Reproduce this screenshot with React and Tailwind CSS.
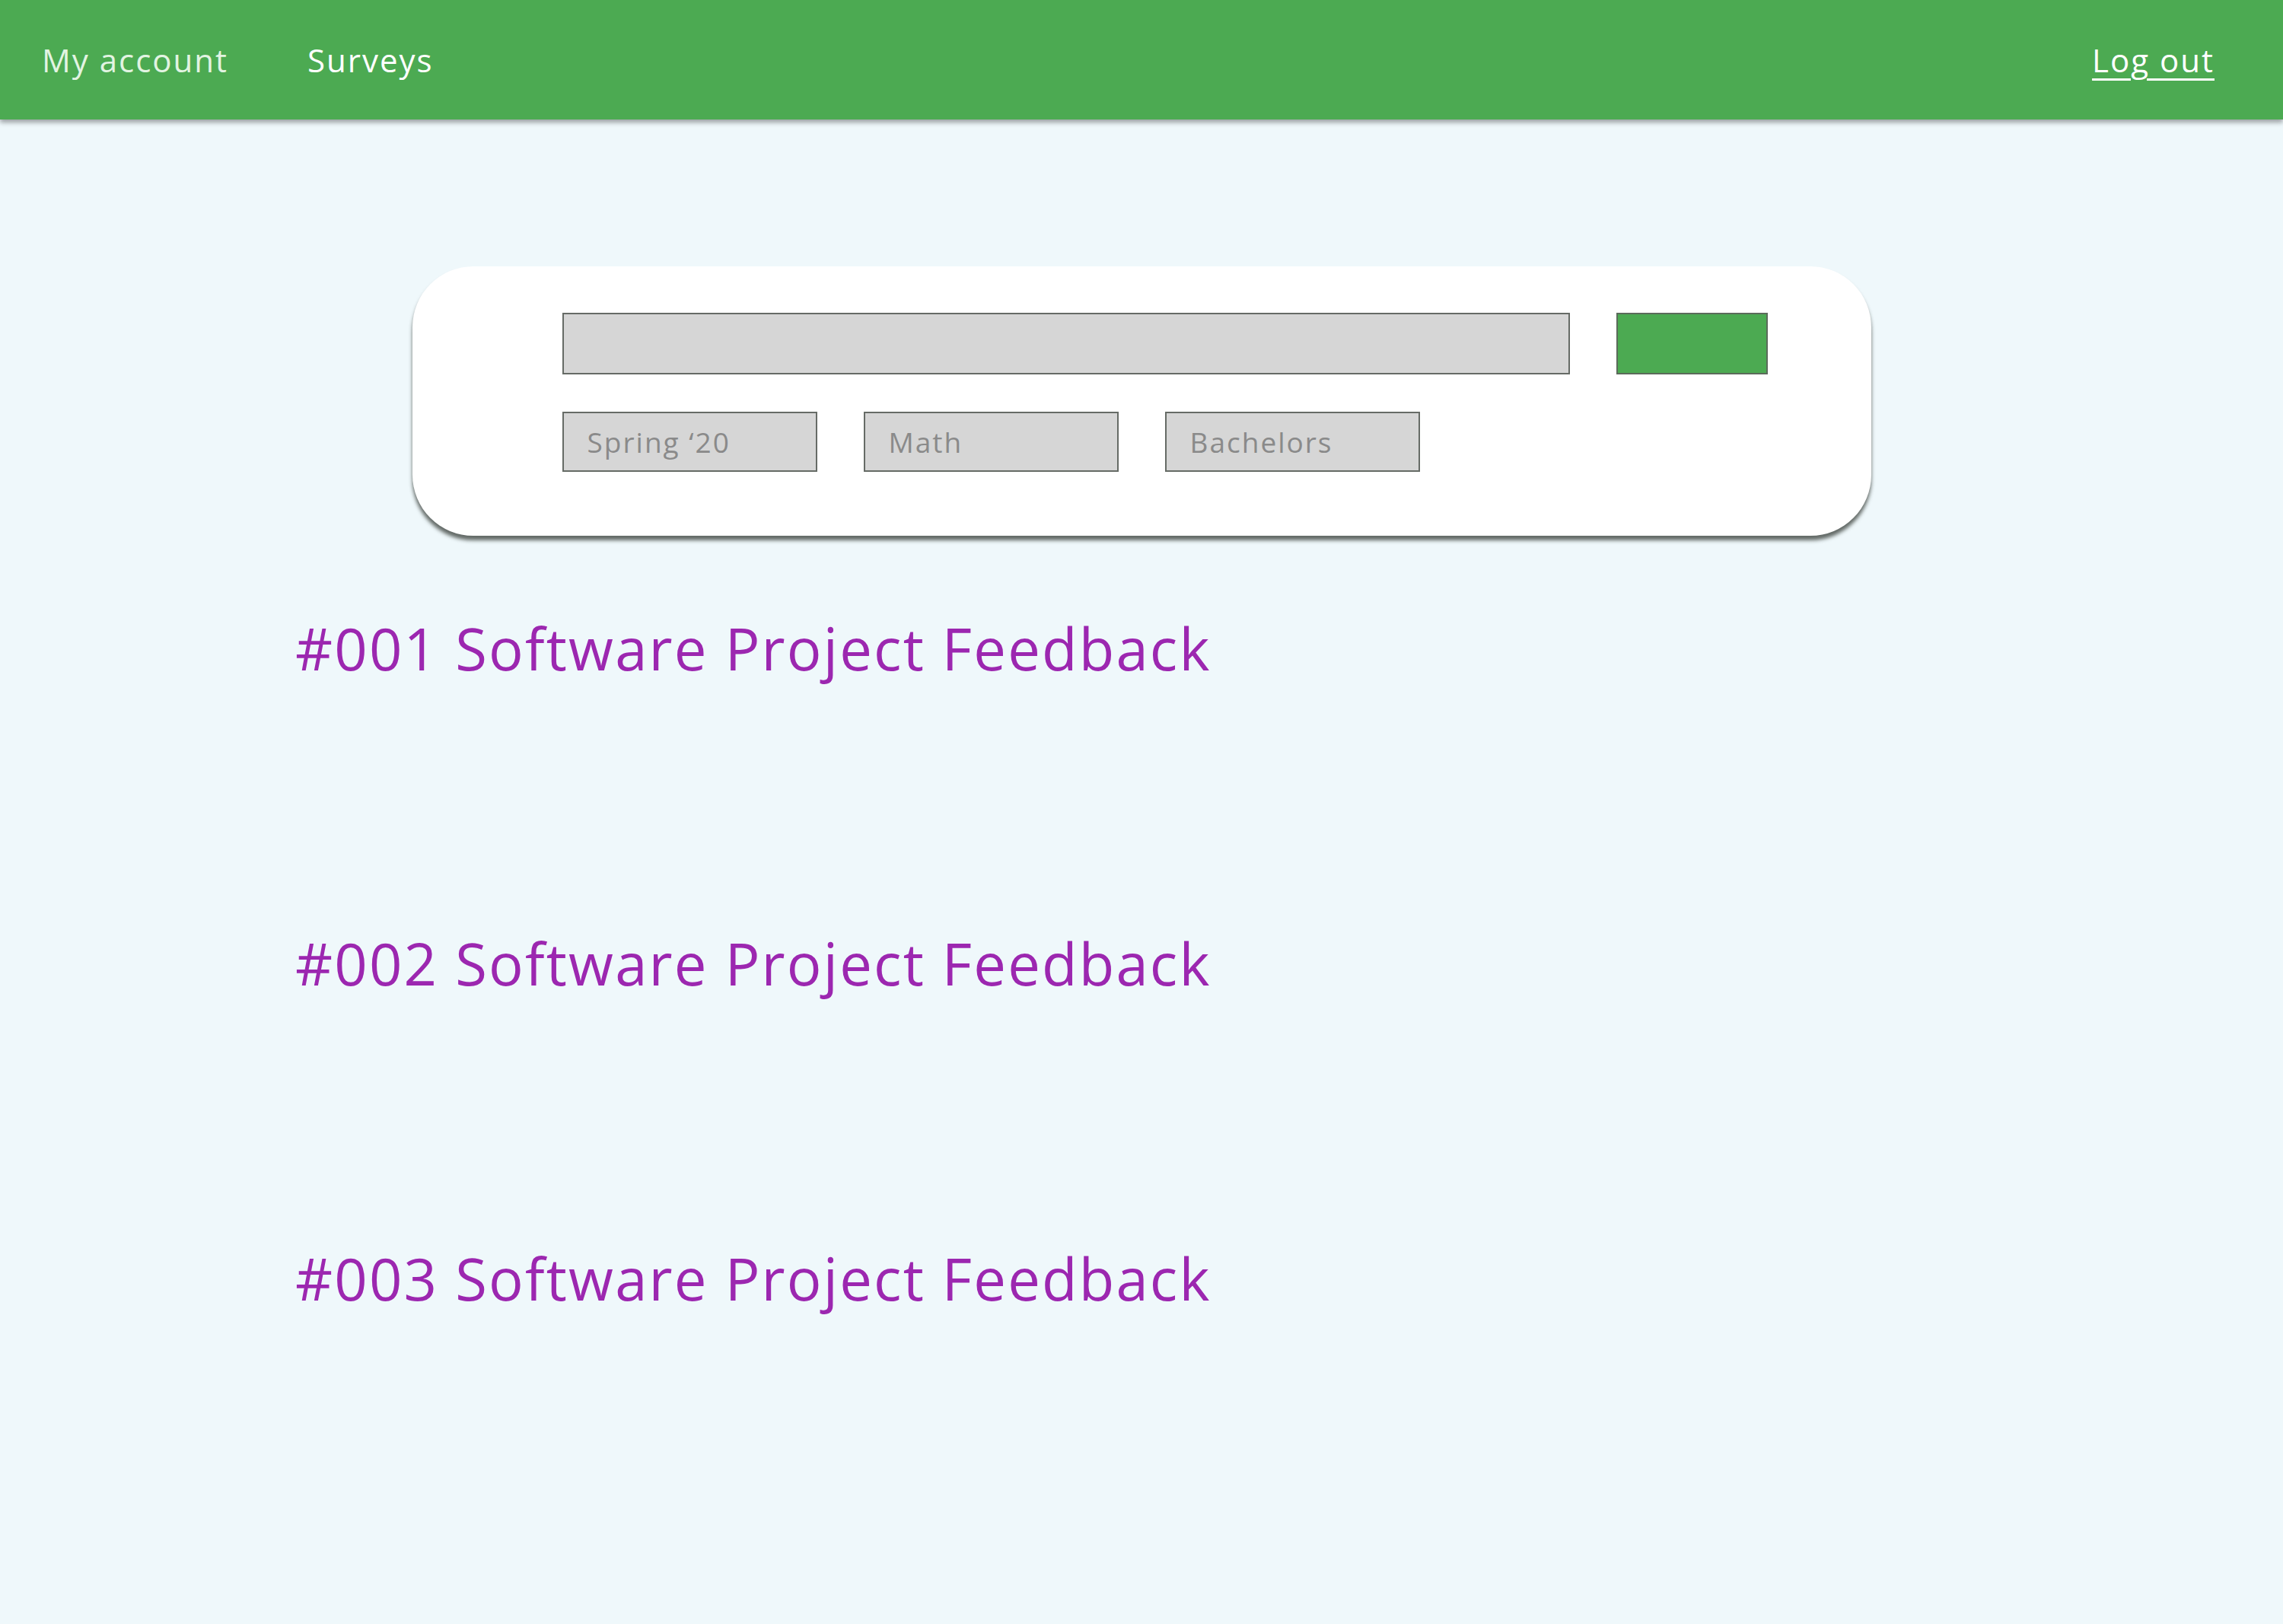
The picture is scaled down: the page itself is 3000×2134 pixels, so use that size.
import React from 'react';

const surveys = [
    { id: '#001', title: 'Software Project Feedback' },
    { id: '#002', title: 'Software Project Feedback' },
    { id: '#003', title: 'Software Project Feedback' },
];

const filters = ['Spring ‘20', 'Math', 'Bachelors'];

export default function App() {
    return (
        <div className="min-h-screen bg-[#eff8fb] font-['Open_Sans',sans-serif]">
            {/* Top navigation */}
            <header className="h-[157px] bg-[#4caa52] shadow-[0_4px_6px_rgba(0,0,0,0.35)] flex items-center pl-[55px] pr-[90px]">
                <a className="text-[42px] tracking-[2px] text-[#e2f4e2] mr-[104px]">My account</a>
                <a className="text-[42px] tracking-[2px] text-white">Surveys</a>
                <a className="ml-auto text-[42px] tracking-[2px] text-white underline underline-offset-[8px] decoration-[3px]">Log out</a>
            </header>

            {/* Search card */}
            <div className="flex justify-center pt-[193px]">
                <div className="w-[1917px] h-[354px] bg-white rounded-[80px] shadow-[0_6px_5px_rgba(40,45,40,0.7)] pl-[197px] pr-[136px] pt-[61px]">
                    <div className="flex gap-[61px]">
                        <input className="flex-1 h-[81px] bg-[#d6d6d6] border-2 border-[#666b66] outline-none" />
                        <button className="w-[199px] h-[81px] bg-[#4caa52] border-2 border-[#5b6b5b]"></button>
                    </div>
                    <div className="flex gap-[61px] mt-[49px]">
                        {filters.map(f => (
                            <div key={f} className="w-[335px] h-[79px] bg-[#d6d6d6] border-2 border-[#666b66] flex items-center pl-[31px] text-[37px] tracking-[2px] text-[#8a8a8a]">
                                {f}
                            </div>
                        ))}
                    </div>
                </div>
            </div>

            {/* Survey list */}
            <div className="pl-[388px] pt-[96px] flex flex-col gap-[310px]">
                {surveys.map(s => (
                    <h2 key={s.id} className="text-[76px] leading-[104px] tracking-[2.2px] text-[#9c27b0]">
                        {s.id} {s.title}
                    </h2>
                ))}
            </div>
        </div>
    );
}
